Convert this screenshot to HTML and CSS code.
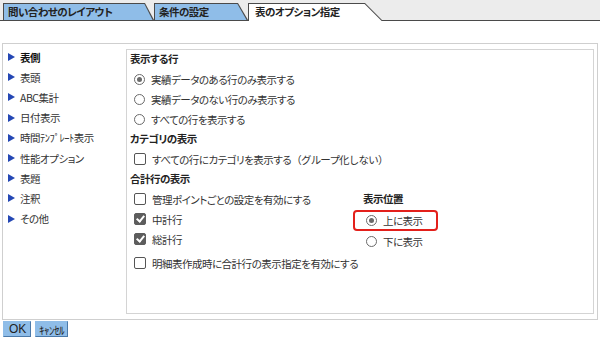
FILE: index.html
```html
<!DOCTYPE html>
<html lang="ja">
<head>
  <meta charset="UTF-8">
  <title>表のオプション指定</title>
  <link rel="stylesheet" href="styles.css">
</head>
<body>
  <!-- Tabs -->
  <div class="tabbar">
    <div class="tab tab-1"><div class="tab-in">問い合わせのレイアウト</div></div>
    <div class="tab tab-2"><div class="tab-in">条件の設定</div></div>
    <div class="tab tab-3 active"><div class="tab-in">表のオプション指定</div></div>
  </div>

  <div class="panel">
    <!-- Left menu -->
    <ul class="nav">
      <li class="current"><span class="arrow"></span>表側</li>
      <li><span class="arrow"></span>表頭</li>
      <li><span class="arrow"></span>ABC集計</li>
      <li><span class="arrow"></span>日付表示</li>
      <li><span class="arrow"></span>時間ﾃﾝﾌﾟﾚｰﾄ表示</li>
      <li><span class="arrow"></span>性能オプション</li>
      <li><span class="arrow"></span>表題</li>
      <li><span class="arrow"></span>注釈</li>
      <li><span class="arrow"></span>その他</li>
    </ul>

    <!-- Options -->
    <div class="main">
      <div class="head">表示する行</div>
      <div class="row"><span class="radio on"></span>実績データのある行のみ表示する</div>
      <div class="row"><span class="radio"></span>実績データのない行のみ表示する</div>
      <div class="row"><span class="radio"></span>すべての行を表示する</div>

      <div class="head">カテゴリの表示</div>
      <div class="row"><span class="check"></span>すべての行にカテゴリを表示する<span class="paren">（グループ化しない）</span></div>

      <div class="head">合計行の表示</div>
      <div class="split">
        <div class="col-left">
          <div class="row"><span class="check"></span>管理ポイントごとの設定を有効にする</div>
          <div class="row"><span class="check on"></span>中計行</div>
          <div class="row"><span class="check on"></span>総計行</div>
        </div>
        <div class="col-right">
          <div class="head sub">表示位置</div>
          <div class="row pos hilite"><span class="radio on"></span>上に表示</div>
          <div class="row pos"><span class="radio"></span>下に表示</div>
        </div>
      </div>
      <div class="row last"><span class="check"></span>明細表作成時に合計行の表示指定を有効にする</div>
    </div>
  </div>

  <div class="buttons">
    <button class="btn ok">OK</button>
    <button class="btn cancel">ｷｬﾝｾﾙ</button>
  </div>
</body>
</html>
```

FILE: styles.css
```css
body {
  margin: 0;
  background: #fff;
  color: #333;
  font-family: "Noto Sans CJK JP", "Liberation Sans", sans-serif;
  font-size: 10.5px;
  letter-spacing: -0.5px;
  font-feature-settings: "palt";
}

/* tabs */
.tabbar {
  display: flex;
  align-items: flex-end;
  height: 20px;
  padding-left: 3px;
  background: #ececec;
  border-bottom: 1px solid #4a4a4a;
}
.tab {
  height: 17px;
  background: #4a4a4a;
}
.tab-in {
  height: 100%;
  box-sizing: border-box;
  padding: 0 0 0 5px;
  line-height: 17px;
  font-weight: bold;
  color: #222;
  background: #8fbde8;
}
.tab-1 {
  width: 151px;
  clip-path: polygon(0 0, 142px 0, 151px 100%, 0 100%);
}
.tab-1 .tab-in {
  clip-path: polygon(1px 1px, 141.4px 1px, 149.6px 100%, 1px 100%);
}
.tab-2 {
  width: 94px;
  clip-path: polygon(0 0, 84px 0, 94px 100%, 0 100%);
}
.tab-2 .tab-in {
  clip-path: polygon(1px 1px, 83.4px 1px, 92.6px 100%, 1px 100%);
}
.tab-3 {
  width: 135px;
  height: 18px;
  margin-bottom: -1px;
  clip-path: polygon(0 0, 117px 0, 135px 100%, 0 100%);
}
.tab-3 .tab-in {
  background: #fff;
  padding-left: 7px;
  line-height: 17px;
  clip-path: polygon(1px 1px, 116.6px 1px, 133.6px 100%, 1px 100%);
}

/* panel */
.panel {
  display: flex;
  margin: 22px 2px 0 2px;
  padding: 5px 3px 5px 0;
  border: 1px solid #cfcfcf;
}
.nav {
  width: 123px;
  margin: -2px 0 0 0;
  padding: 0 0 0 5px;
  box-sizing: border-box;
  list-style: none;
}
.nav li {
  display: flex;
  align-items: center;
  height: 20.2px;
}
.nav li.current {
  font-weight: bold;
  color: #111;
}
.arrow {
  width: 0;
  height: 0;
  margin-right: 5px;
  border-left: 7px solid #2447b4;
  border-top: 4.5px solid transparent;
  border-bottom: 4.5px solid transparent;
}

.main {
  flex: 1;
  height: 265px;
  box-sizing: border-box;
  padding: 0 0 0 3px;
  border: 1px solid #d4d4d4;
}
.head {
  height: 20px;
  line-height: 18px;
  font-weight: bold;
  color: #222;
}
.row {
  display: flex;
  align-items: center;
  height: 20px;
  box-sizing: border-box;
  padding: 0 0 2px 4px;
}
.row.last {
  margin-top: 3px;
}
.paren {
  font-feature-settings: normal;
  letter-spacing: -0.8px;
}

.radio {
  width: 11px;
  height: 11px;
  margin-right: 6px;
  box-sizing: border-box;
  border: 1px solid #6a6a6a;
  border-radius: 50%;
  background: #fff;
  display: flex;
  align-items: center;
  justify-content: center;
}
.radio.on::after {
  content: "";
  width: 5px;
  height: 5px;
  border-radius: 50%;
  background: #6a6a6a;
}
.check {
  width: 12px;
  height: 12px;
  margin-right: 6px;
  box-sizing: border-box;
  border: 1px solid #555;
  border-radius: 2px;
  background: #fff;
  position: relative;
}
.check.on {
  background: #5d5d5d;
  border-color: #5d5d5d;
}
.check.on::after {
  content: "";
  position: absolute;
  left: 3px;
  top: 0px;
  width: 3px;
  height: 6px;
  border: solid #fff;
  border-width: 0 2px 2px 0;
  transform: rotate(40deg);
}

.split {
  display: flex;
}
.col-left {
  width: 223px;
}
.col-right {
  width: 85px;
}
.head.sub {
  padding-left: 10px;
}
.row.pos {
  padding: 0 0 0 13px;
}
.row.hilite {
  height: 21px;
  padding-left: 11px;
  border: 2px solid #e3201b;
  border-radius: 4px;
}

/* buttons */
.buttons {
  display: flex;
  gap: 4px;
  padding: 1px 0 0 3px;
}
.btn {
  height: 16px;
  padding: 0 5px;
  font-family: "Liberation Sans", "Noto Sans CJK JP", sans-serif;
  font-size: 11px;
  letter-spacing: 0;
  color: #222;
  background: #8fbde8;
  border: 1px solid #8fbde8;
  border-right-color: #4b79a8;
  border-bottom-color: #4b79a8;
  border-radius: 0;
}
.btn.ok {
  width: 28px;
  font-size: 12px;
}
.btn.cancel {
  width: 33px;
  padding: 0;
  font-family: "Noto Sans CJK JP", sans-serif;
  font-size: 11px;
  letter-spacing: -0.5px;
}
```
